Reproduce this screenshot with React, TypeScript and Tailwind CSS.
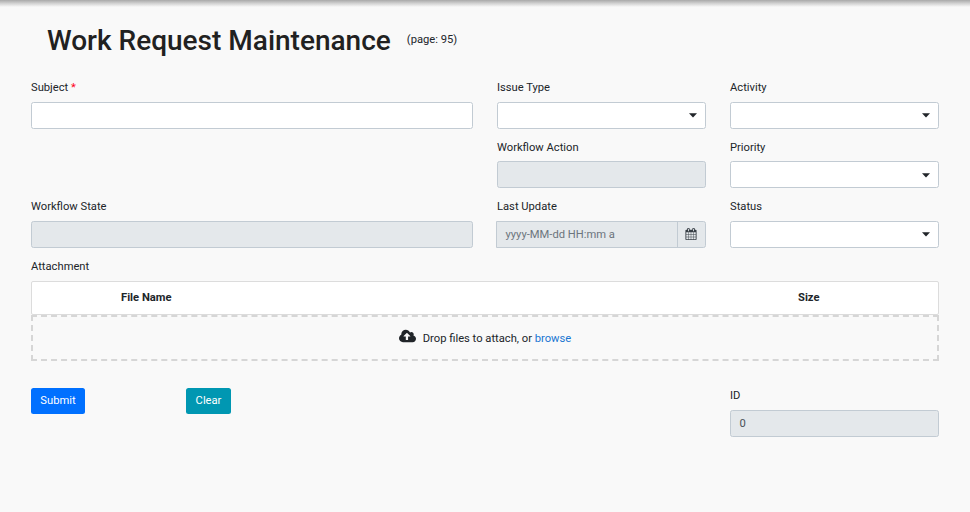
import React from "react";

const box = "h-[27px] w-full rounded-[2.5px] border border-[#c2cbd3]";

function Field({ label, required, className = "", labelClass = "mb-[7px]", children }: {
  label: string;
  required?: boolean;
  className?: string;
  labelClass?: string;
  children: React.ReactNode;
}) {
  return (
    <div className={className}>
      <div className={`h-[15px] leading-[15px] ${labelClass}`}>
        {label}
        {required && <span className="text-[#ff0018]"> *</span>}
      </div>
      {children}
    </div>
  );
}

function Select({ caretClass = "pt-[10px]" }: { caretClass?: string }) {
  return (
    <div className={`${box} flex items-start justify-end bg-white pr-2 ${caretClass}`}>
      <svg width="8" height="5" viewBox="0 0 8 5" className="text-[#212529]">
        <path d="M0 0.3h8L4 4.5z" fill="currentColor" />
      </svg>
    </div>
  );
}

function Disabled({ value = "" }: { value?: string }) {
  return <div className={`${box} bg-[#e4e8eb] px-[8.5px] leading-[25px] text-[#495057]`}>{value}</div>;
}

function CalendarIcon() {
  return (
    <svg width="12" height="12" viewBox="0 0 1792 1792" fill="currentColor">
      <path d="M192 1664h288v-288h-288v288zm352 0h320v-288h-320v288zm-352-352h288v-320h-288v320zm352 0h320v-320h-320v320zm-352-384h288v-288h-288v288zm736 736h320v-288h-320v288zm-384-736h320v-288h-320v288zm768 736h288v-288h-288v288zm-384-352h320v-320h-320v320zm-352-864v-288q0-13-9.5-22.5t-22.5-9.5h-64q-13 0-22.5 9.5t-9.5 22.5v288q0 13 9.5 22.5t22.5 9.5h64q13 0 22.5-9.5t9.5-22.5zm736 864h288v-320h-288v320zm-384-384h320v-288h-320v288zm384 0h288v-288h-288v288zm32-480v-288q0-13-9.5-22.5t-22.5-9.5h-64q-13 0-22.5 9.5t-9.5 22.5v288q0 13 9.5 22.5t22.5 9.5h64q13 0 22.5-9.5t9.5-22.5zm384-64v1280q0 52-38 90t-90 38h-1408q-52 0-90-38t-38-90v-1280q0-52 38-90t90-38h128v-96q0-66 47-113t113-47h64q66 0 113 47t47 113v96h384v-96q0-66 47-113t113-47h64q66 0 113 47t47 113v96h128q52 0 90 38t38 90z" />
    </svg>
  );
}

function CloudUploadIcon() {
  return (
    <svg width="17" height="16" viewBox="0 0 1920 1792" fill="currentColor" className="mb-1">
      <path d="M1280 928q0-14-9-23l-352-352q-9-9-23-9t-23 9l-351 351q-10 12-10 24 0 14 9 23t23 9h224v352q0 13 9.5 22.5t22.5 9.5h192q13 0 22.5-9.5t9.5-22.5v-352h224q13 0 22.5-9.5t9.5-22.5zm640 288q0 159-112.5 271.5t-271.5 112.5h-1088q-185 0-316.5-131.5t-131.5-316.5q0-130 70-240t188-165q-2-30-2-43 0-212 150-362t362-150q156 0 285.5 87t188.5 231q71-62 166-62 106 0 181 75t75 181q0 76-41 138 130 31 213.5 135.5t83.5 238.5z" />
    </svg>
  );
}

export default function App() {
  return (
    <div className="h-[512px] w-[970px] overflow-hidden bg-[#f9f9f9] font-['Roboto',sans-serif] text-[11.2px] text-[#212529]">
      <div className="h-[7px] bg-linear-to-b from-[#a9a9a9] via-[#d3d3d3] to-[#f9f9f9]" />
      <header className="flex h-[73px] pl-[47px]">
        <h1 className="mt-[16px] h-[36px] text-[28px] leading-[36px] font-medium whitespace-nowrap text-[#212121]">
          Work Request Maintenance
        </h1>
        <span className="mt-[25px] ml-4 leading-[15px]">(page: 95)</span>
      </header>

      <main className="px-[31px]">
        <div className="grid grid-cols-[442px_209px_209px] grid-rows-[59px_60px_60px] gap-x-6">
          <Field label="Subject" required>
            <div className={`${box} bg-white`} />
          </Field>
          <Field label="Issue Type"><Select /></Field>
          <Field label="Activity"><Select /></Field>
          <Field label="Workflow Action" className="col-start-2" labelClass="mt-px mb-[6px]"><Disabled /></Field>
          <Field label="Priority" labelClass="mt-px mb-[6px]"><Select caretClass="pt-[11px]" /></Field>
          <Field label="Workflow State"><Disabled /></Field>
          <Field label="Last Update">
            <div className="-ml-px flex h-[27px] rounded-r-[2.5px] border border-[#c2cbd3] bg-[#e4e8eb]">
              <div className="flex-1 pl-[8.5px] leading-[25px] text-[#6c757d]">yyyy-MM-dd HH:mm a</div>
              <div className="flex w-[28px] items-center justify-center border-l border-[#c2cbd3] pr-px pb-[2px] text-[#373e45]">
                <CalendarIcon />
              </div>
            </div>
          </Field>
          <Field label="Status"><Select /></Field>
        </div>

        <Field label="Attachment">
          <div className="flex h-[34px] rounded-[2px] border border-[#dcdcdc] bg-white leading-[32px] font-bold">
            <div className="w-[766px] pl-[89px]">File Name</div>
            <div>Size</div>
          </div>
          <div className="flex h-[46px] items-center justify-center border-2 border-dashed border-[#d6d6d6]">
            <CloudUploadIcon />
            <span className="ml-[7px] pt-[2px]">
              Drop files to attach, or <a className="text-[#1976d2]">browse</a>
            </span>
          </div>
        </Field>

        <div className="mt-[27px] flex">
          <button className="h-[26px] w-[54px] rounded-[2.5px] bg-[#0070ff] text-white">Submit</button>
          <button className="ml-[101px] h-[26px] w-[45px] rounded-[2.5px] bg-[#0097b2] text-white">Clear</button>
          <Field label="ID" className="ml-auto w-[209px]"><Disabled value="0" /></Field>
        </div>
      </main>
    </div>
  );
}
